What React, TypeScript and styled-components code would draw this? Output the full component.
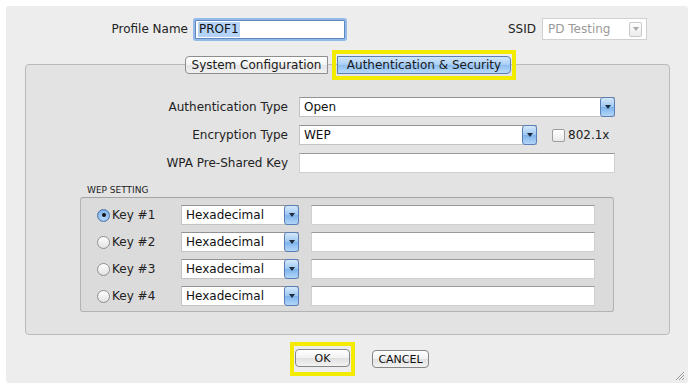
import React from "react";
import styled, { createGlobalStyle } from "styled-components";

const GlobalStyle = createGlobalStyle`
  body {
    margin: 0;
    background: #fff;
    font-family: "DejaVu Sans", "Liberation Sans", sans-serif;
    font-size: 12px;
    color: #222;
  }
`;

const Dialog = styled.div`
  position: relative;
  margin: 6px 0 0 6px;
  width: 682px;
  height: 377px;
  box-sizing: border-box;
  padding-top: 11px;
  background: #ededed;
  border-radius: 3px;
`;

const TopRow = styled.div`
  display: flex;
  align-items: center;
  height: 24px;
`;

const TopLabel = styled.div<{ $width?: number }>`
  width: ${(p) => (p.$width ? `${p.$width}px` : "auto")};
  text-align: right;
  margin-right: 6px;
  font-size: 12px;
  color: #222;
`;

const FocusField = styled.div`
  width: 150px;
  height: 19px;
  margin-left: 1px;
  box-sizing: border-box;
  display: flex;
  align-items: center;
  padding-left: 2px;
  background: #fff;
  border: 1px solid #5f86bd;
  box-shadow: 0 0 0 2px #93bbe9;
  border-radius: 1px;
`;

const Selected = styled.span`
  background: #b4d3f7;
  padding: 0 1px;
  line-height: 15px;
  color: #111;
`;

const SsidGroup = styled.div`
  display: flex;
  align-items: center;
  margin-left: auto;
  margin-right: 41px;
`;

const DisabledSelect = styled.div`
  width: 105px;
  height: 22px;
  box-sizing: border-box;
  display: flex;
  align-items: center;
  justify-content: space-between;
  padding: 0 4px 0 5px;
  background: #fff;
  border: 1px solid #d0d0d0;
  color: #9a9a9a;
`;

const GreyArrow = styled.div`
  width: 13px;
  height: 15px;
  box-sizing: border-box;
  border: 1px solid #c9c9c9;
  border-radius: 2px;
  background: linear-gradient(#fdfdfd, #ececec);
  display: flex;
  align-items: center;
  justify-content: center;
  &::after {
    content: "";
    border-left: 3px solid transparent;
    border-right: 3px solid transparent;
    border-top: 4px solid #aaa;
  }
`;

const GroupBox = styled.div`
  margin: 23px 18px 0 19px;
  height: 271px;
  box-sizing: border-box;
  display: flex;
  flex-direction: column;
  background: #e3e3e3;
  border: 1px solid #bababa;
  border-radius: 4px;
`;

const TabRow = styled.div`
  display: flex;
  justify-content: center;
  align-items: center;
  height: 30px;
  margin: -15px 0 0 6px;
  gap: 4px;
`;

const Tab = styled.div<{ $active?: boolean; $width: number }>`
  width: ${(p) => p.$width}px;
  height: 18px;
  box-sizing: border-box;
  display: flex;
  align-items: center;
  justify-content: center;
  font-size: 12px;
  color: #1a1a1a;
  border: 1px solid ${(p) => (p.$active ? "#5b7fae" : "#8e8e8e")};
  border-radius: ${(p) => (p.$active ? "0 4px 4px 0" : "4px 0 0 4px")};
  background: ${(p) =>
    p.$active
      ? "linear-gradient(#d3e7fc, #a7cdf5 50%, #8cbdf0 51%, #b9dafa)"
      : "linear-gradient(#ffffff, #f3f3f3 50%, #e4e4e4 51%, #f0f0f0)"};
`;

const Highlight = styled.div<{ $pad: string }>`
  display: flex;
  border: 4px solid #f4ec00;
  padding: ${(p) => p.$pad};
`;

const FormGrid = styled.div`
  margin-top: 17px;
  display: grid;
  grid-template-columns: 262px auto;
  column-gap: 11px;
  row-gap: 8px;
`;

const FieldLabel = styled.div`
  text-align: right;
  line-height: 20px;
  font-size: 12px;
  color: #222;
`;

const ControlLine = styled.div`
  display: flex;
  align-items: center;
  height: 20px;
`;

const Dropdown = styled.div<{ $width: number }>`
  width: ${(p) => p.$width}px;
  height: 20px;
  box-sizing: border-box;
  display: flex;
  align-items: center;
  justify-content: space-between;
  padding-left: 4px;
  background: #fff;
  border: 1px solid #c3c3c3;
  border-top-color: #939393;
  font-size: 12px;
  color: #111;
`;

const BlueArrow = styled.div`
  width: 15px;
  height: 20px;
  margin: -1px -1px -1px 0;
  box-sizing: border-box;
  display: flex;
  align-items: center;
  justify-content: center;
  border: 1px solid #5a7fb6;
  border-radius: 3px;
  background: linear-gradient(#d6e8fb, #9cc6f1 50%, #7db3ec 51%, #b3d6f8);
  &::after {
    content: "";
    border-left: 3px solid transparent;
    border-right: 3px solid transparent;
    border-top: 4px solid #1d2a3c;
  }
`;

const TextBox = styled.div<{ $width?: number }>`
  width: ${(p) => (p.$width ? `${p.$width}px` : "100%")};
  height: 20px;
  box-sizing: border-box;
  background: #fff;
  border: 1px solid #cfcfcf;
  border-top-color: #9a9a9a;
`;

const CheckBox = styled.div`
  width: 13px;
  height: 13px;
  margin: 0 3px 0 15px;
  box-sizing: border-box;
  border: 1px solid #9d9d9d;
  border-radius: 2px;
  background: linear-gradient(#ffffff, #e9e9e9);
`;

const SmallCaps = styled.div`
  margin: 12px 0 0 61px;
  font-size: 9px;
  line-height: 10px;
  color: #222;
`;

const WepBox = styled.div`
  margin: 2px 55px 0 54px;
  padding: 7px 18px 5px 16px;
  display: flex;
  flex-direction: column;
  gap: 7px;
  background: #dbdbdb;
  border: 1px solid #b3b3b3;
  border-top-color: #a4a4a4;
  border-radius: 3px;
`;

const KeyRow = styled.div`
  display: grid;
  grid-template-columns: 72px 118px 1fr;
  column-gap: 12px;
  align-items: center;
`;

const RadioLabel = styled.div`
  display: flex;
  align-items: center;
  gap: 2px;
  font-size: 12px;
  color: #222;
`;

const Radio = styled.div<{ $on?: boolean }>`
  width: 13px;
  height: 13px;
  box-sizing: border-box;
  border-radius: 50%;
  display: flex;
  align-items: center;
  justify-content: center;
  border: 1px solid ${(p) => (p.$on ? "#4f73a8" : "#8f8f8f")};
  background: ${(p) =>
    p.$on
      ? "radial-gradient(circle at 50% 70%, #b6d7f8, #6ea6e6)"
      : "linear-gradient(#ffffff, #e2e2e2)"};
  &::after {
    content: "";
    display: ${(p) => (p.$on ? "block" : "none")};
    width: 4px;
    height: 4px;
    border-radius: 50%;
    background: #111;
  }
`;

const ButtonRow = styled.div`
  display: flex;
  align-items: center;
  gap: 17px;
  margin: 7px 0 0 284px;
`;

const PushButton = styled.div<{ $width: number }>`
  width: ${(p) => p.$width}px;
  height: 18px;
  box-sizing: border-box;
  display: flex;
  align-items: center;
  justify-content: center;
  font-size: 11px;
  color: #111;
  border: 1px solid #878787;
  border-radius: 4px;
  background: linear-gradient(#ffffff, #f1f1f1 50%, #e0e0e0 51%, #f2f2f2);
`;

const Grip = styled.svg`
  position: absolute;
  right: 3px;
  bottom: 2px;
`;

const keys = ["Key #1", "Key #2", "Key #3", "Key #4"];

const App = () => {
  return (
    <>
      <GlobalStyle />
      <Dialog>
        <TopRow>
          <TopLabel $width={182}>Profile Name</TopLabel>
          <FocusField>
            <Selected>PROF1</Selected>
          </FocusField>
          <SsidGroup>
            <TopLabel>SSID</TopLabel>
            <DisabledSelect>
              PD Testing
              <GreyArrow />
            </DisabledSelect>
          </SsidGroup>
        </TopRow>

        <GroupBox>
          <TabRow>
            <Tab $width={143}>System Configuration</Tab>
            <Highlight $pad="2px 1px 2px 1px">
              <Tab $active $width={174}>Authentication &amp; Security</Tab>
            </Highlight>
          </TabRow>

          <FormGrid>
            <FieldLabel>Authentication Type</FieldLabel>
            <ControlLine>
              <Dropdown $width={316}>
                Open
                <BlueArrow />
              </Dropdown>
            </ControlLine>

            <FieldLabel>Encryption Type</FieldLabel>
            <ControlLine>
              <Dropdown $width={238}>
                WEP
                <BlueArrow />
              </Dropdown>
              <CheckBox />
              802.1x
            </ControlLine>

            <FieldLabel>WPA Pre-Shared Key</FieldLabel>
            <ControlLine>
              <TextBox $width={316} />
            </ControlLine>
          </FormGrid>

          <SmallCaps>WEP SETTING</SmallCaps>
          <WepBox>
            {keys.map((k, i) => (
              <KeyRow key={k}>
                <RadioLabel>
                  <Radio $on={i === 0} />
                  {k}
                </RadioLabel>
                <Dropdown $width={118}>
                  Hexadecimal
                  <BlueArrow />
                </Dropdown>
                <TextBox />
              </KeyRow>
            ))}
          </WepBox>
        </GroupBox>

        <ButtonRow>
          <Highlight $pad="3px 1px 5px 1px">
            <PushButton $width={55}>OK</PushButton>
          </Highlight>
          <PushButton $width={57}>CANCEL</PushButton>
        </ButtonRow>

        <Grip width="11" height="11" viewBox="0 0 11 11">
          <path d="M10 2 L2 10 M10 5 L5 10 M10 8 L8 10" stroke="#9a9a9a" strokeWidth="1" />
        </Grip>
      </Dialog>
    </>
  );
};

export default App;
